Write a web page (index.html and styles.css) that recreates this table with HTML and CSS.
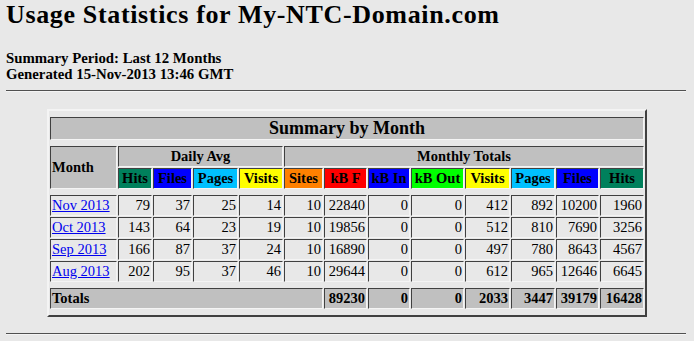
FILE: index.html
```html
<!DOCTYPE html>
<html lang="en">
<head>
  <meta charset="UTF-8" />
  <title>Usage Statistics for My-NTC-Domain.com - Summary by Month</title>
  <link rel="stylesheet" href="styles.css">
</head>
<body>

  <h2 class="title">Usage Statistics for My-NTC-Domain.com</h2>
  <p class="period">
    Summary Period: Last 12 Months<br>
    Generated 15-Nov-2013 13:46 GMT
  </p>
  <hr>

  <table class="summary">
    <colgroup>
      <col class="c-month">
      <col class="c-hits"><col class="c-files"><col class="c-pages"><col class="c-visits">
      <col class="c-sites"><col class="c-kbf"><col class="c-kbin"><col class="c-kbout">
      <col class="c-visits2"><col class="c-pages2"><col class="c-files2"><col class="c-hits2">
    </colgroup>
    <tr class="gap"><td colspan="13"></td></tr>
    <tr><th colspan="13" class="caption">Summary by Month</th></tr>
    <tr class="gap"><td colspan="13"></td></tr>
    <tr>
      <th rowspan="2" class="grey left">Month</th>
      <th colspan="4" class="grey">Daily Avg</th>
      <th colspan="8" class="grey">Monthly Totals</th>
    </tr>
    <tr>
      <th class="hits">Hits</th>
      <th class="files">Files</th>
      <th class="pages">Pages</th>
      <th class="visits">Visits</th>
      <th class="sites">Sites</th>
      <th class="kbytes">kB F</th>
      <th class="kbin">kB In</th>
      <th class="kbout">kB Out</th>
      <th class="visits">Visits</th>
      <th class="pages">Pages</th>
      <th class="files">Files</th>
      <th class="hits">Hits</th>
    </tr>
    <tr class="gap"><td colspan="13"></td></tr>
    <tr>
      <td class="month"><a href="#usage_201311">Nov 2013</a></td>
      <td>79</td><td>37</td><td>25</td><td>14</td>
      <td>10</td><td>22840</td><td>0</td><td>0</td><td>412</td><td>892</td><td>10200</td><td>1960</td>
    </tr>
    <tr>
      <td class="month"><a href="#usage_201310">Oct 2013</a></td>
      <td>143</td><td>64</td><td>23</td><td>19</td>
      <td>10</td><td>19856</td><td>0</td><td>0</td><td>512</td><td>810</td><td>7690</td><td>3256</td>
    </tr>
    <tr>
      <td class="month"><a href="#usage_201309">Sep 2013</a></td>
      <td>166</td><td>87</td><td>37</td><td>24</td>
      <td>10</td><td>16890</td><td>0</td><td>0</td><td>497</td><td>780</td><td>8643</td><td>4567</td>
    </tr>
    <tr>
      <td class="month"><a href="#usage_201308">Aug 2013</a></td>
      <td>202</td><td>95</td><td>37</td><td>46</td>
      <td>10</td><td>29644</td><td>0</td><td>0</td><td>612</td><td>965</td><td>12646</td><td>6645</td>
    </tr>
    <tr class="gap"><td colspan="13"></td></tr>
    <tr class="totals">
      <th colspan="6" class="left">Totals</th>
      <th>89230</th><th>0</th><th>0</th><th>2033</th><th>3447</th><th>39179</th><th>16428</th>
    </tr>
    <tr class="gap"><td colspan="13"></td></tr>
  </table>

  <hr>

</body>
</html>
```

FILE: styles.css
```css
body {
  margin: 0 8px 0 6px;
  background-color: #e8e8e8;
  color: #000;
  font-family: "Liberation Serif", "Times New Roman", serif;
}

.title {
  font-size: 26px;
  letter-spacing: 0.65px;
  line-height: 30px;
  margin: 0;
}

.period {
  font-size: 14.8px;
  font-weight: bold;
  line-height: 16px;
  margin: 20px 0 8px;
}

hr {
  border: 0;
  border-top: 1px solid #505050;
  border-bottom: 1px solid #f4f4f4;
  margin: 0;
}

/* summary table: raised frame, sunken cells */
.summary {
  table-layout: fixed;
  width: 600px;
  margin: 17px 0 16px 41px;
  border: 2px solid;
  border-color: #f4f4f4 #404040 #404040 #f4f4f4;
  border-spacing: 1px;
  font-size: 14.5px;
}

.c-month  { width: 67px; }
.c-hits   { width: 34px; }
.c-files  { width: 39px; }
.c-pages  { width: 45px; }
.c-visits { width: 44px; }
.c-sites  { width: 39px; }
.c-kbf    { width: 43px; }
.c-kbin   { width: 42px; }
.c-kbout  { width: 53px; }
.c-visits2 { width: 45px; }
.c-pages2 { width: 44px; }
.c-files2 { width: 43px; }
.c-hits2  { width: 44px; }

.summary td,
.summary th {
  border: 1px solid;
  border-color: #404040 #f4f4f4 #f4f4f4 #404040;
  padding: 1px;
  line-height: 17px;
  white-space: nowrap;
  overflow: hidden;
}

.summary td {
  text-align: right;
}

.summary th {
  text-align: center;
}

.summary .gap td {
  height: 4px;
  padding: 0;
  border: 0;
  line-height: 0;
}

.summary .caption {
  background-color: #c0c0c0;
  font-size: 18px;
  line-height: 19px;
}

.summary .grey,
.totals th {
  background-color: #c0c0c0;
}

.summary .left,
.summary .month {
  text-align: left;
}

.totals th {
  text-align: right;
}

.month a {
  color: #0000ee;
}

.hits   { background-color: #00805c; }
.files  { background-color: #0000ff; }
.pages  { background-color: #00c0ff; }
.visits { background-color: #ffff00; }
.sites  { background-color: #ff8000; }
.kbytes { background-color: #ff0000; }
.kbin   { background-color: #0000ff; }
.kbout  { background-color: #00ff00; }
```
